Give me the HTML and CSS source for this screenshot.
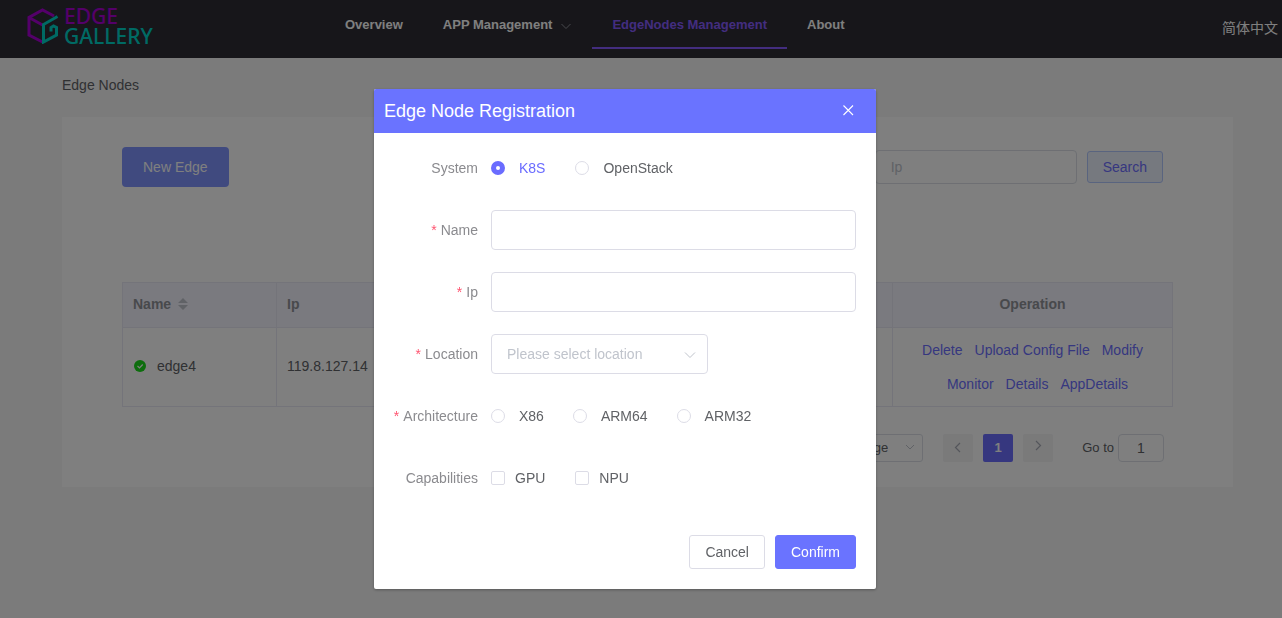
FILE: index.html
```
<!DOCTYPE html>
<html lang="en">
<head>
<meta charset="utf-8">
<title>Edge Nodes</title>
<link rel="stylesheet" href="styles.css">
</head>
<body>
<header class="topbar">
  <a class="logo" href="#">
    <svg class="logo-mark" viewBox="0 0 32 36" fill="none" stroke-width="3" aria-hidden="true">
      <path stroke="#a800d4" d="M27 8 15.500 2 2 9.500v17.500L15.500 34M2 9.500 15.500 17"/>
      <path stroke="#00d4c8" d="M30.500 8.500 16.500 16.500v17.500L29.500 27v-7.500l-3-1.500-2.500 1.500v4"/>
    </svg>
    <span class="logo-text"><span class="logo-edge">EDGE</span><span class="logo-gallery">GALLERY</span></span>
  </a>
  <nav class="nav">
    <a class="nav-item" href="#">Overview</a>
    <a class="nav-item" href="#">APP Management
      <svg class="nav-arrow" viewBox="0 0 12 12" fill="none" stroke="#909399" aria-hidden="true"><path d="M1.500 3 6 7.500 10.500 3"/></svg>
    </a>
    <a class="nav-item active" href="#">EdgeNodes Management</a>
    <a class="nav-item" href="#">About</a>
  </nav>
  <a class="lang" href="#">简体中文</a>
</header>

<main class="page">
  <h1 class="crumb">Edge Nodes</h1>
  <section class="card">
    <div class="toolbar">
      <button class="new-edge" type="button">New Edge</button>
      <form class="search">
        <input class="search-input" type="text" placeholder="Ip" aria-label="Ip">
        <button class="search-button" type="button">Search</button>
      </form>
    </div>
    <table class="nodes">
      <colgroup><col class="col-name"><col class="col-ip"><col class="col-operation"></colgroup>
      <thead>
        <tr>
          <th>Name
            <svg class="sort" viewBox="0 0 10 12" fill="#c0c4cc" aria-hidden="true"><path d="M0 5 5 0l5 5zM0 7h10l-5 5z"/></svg>
          </th>
          <th>Ip</th>
          <th class="center">Operation</th>
        </tr>
      </thead>
      <tbody>
        <tr>
          <td>
            <span class="node">
              <svg class="status" viewBox="0 0 12 12" aria-hidden="true"><circle cx="6" cy="6" r="6" fill="#1adb1a"/><path d="m3.500 6 2 2 3.200-3.500" fill="none" stroke="#fff" stroke-width="1.200"/></svg>
              edge4
            </span>
          </td>
          <td>119.8.127.14</td>
          <td class="operation-cell">
            <div class="operations">
              <button type="button">Delete</button>
              <button type="button">Upload Config File</button>
              <button type="button">Modify</button>
              <button type="button">Monitor</button>
              <button type="button">Details</button>
              <button type="button">AppDetails</button>
            </div>
          </td>
        </tr>
      </tbody>
    </table>
    <div class="pagination">
      <span class="size-wrap">
        <select class="size" aria-label="Page size"><option>10/page</option></select>
        <svg class="size-arrow" viewBox="0 0 12 12" fill="none" stroke="#c0c4cc" aria-hidden="true"><path d="M2 4l4 4 4-4"/></svg>
      </span>
      <div class="pager">
        <button type="button" aria-label="Previous"><svg viewBox="0 0 12 12" fill="none" stroke="#a9adb6" stroke-width="1.200"><path d="M8 1 3.500 5.500 8 10"/></svg></button>
        <button class="current" type="button">1</button>
        <button type="button" aria-label="Next"><svg viewBox="0 0 12 12" fill="none" stroke="#a9adb6" stroke-width="1.200"><path d="M4-1 8.500 3.500 4 8"/></svg></button>
      </div>
      <label class="jump">Go to <input type="text" value="1"></label>
    </div>
  </section>
</main>

<div class="overlay">
  <div class="dialog" role="dialog" aria-modal="true" aria-labelledby="dialog-title">
    <div class="dialog-header">
      <h2 id="dialog-title">Edge Node Registration</h2>
      <button class="close" type="button" aria-label="Close"><svg viewBox="0 0 12 12" fill="none" stroke="#fff" stroke-width="1.100"><path d="m1.500 1.500 9.500 9.500M11 1.500 1.500 11"/></svg></button>
    </div>
    <form class="form">
      <div class="row" role="radiogroup" aria-labelledby="l-system">
        <span class="label" id="l-system">System</span>
        <div class="choices">
          <label class="radio"><input type="radio" name="system" checked><span>K8S</span></label>
          <label class="radio"><input type="radio" name="system"><span>OpenStack</span></label>
        </div>
      </div>
      <div class="row">
        <label class="label required" for="name">Name</label>
        <input class="field" id="name" type="text">
      </div>
      <div class="row">
        <label class="label required" for="ip">Ip</label>
        <input class="field" id="ip" type="text">
      </div>
      <div class="row">
        <label class="label required" for="location">Location</label>
        <div class="select-wrap">
          <select class="field select" id="location"><option>Please select location</option></select>
          <svg class="select-arrow" viewBox="0 0 12 12" fill="none" stroke="#c0c4cc" aria-hidden="true"><path d="M1 3.500l5 5 5-5"/></svg>
        </div>
      </div>
      <div class="row" role="radiogroup" aria-labelledby="l-arch">
        <span class="label required" id="l-arch">Architecture</span>
        <div class="choices tight">
          <label class="radio"><input type="radio" name="arch"><span>X86</span></label>
          <label class="radio"><input type="radio" name="arch"><span>ARM64</span></label>
          <label class="radio"><input type="radio" name="arch"><span>ARM32</span></label>
        </div>
      </div>
      <div class="row" role="group" aria-labelledby="l-cap">
        <span class="label" id="l-cap">Capabilities</span>
        <div class="choices">
          <label class="check"><input type="checkbox"><span>GPU</span></label>
          <label class="check"><input type="checkbox"><span>NPU</span></label>
        </div>
      </div>
    </form>
    <div class="dialog-footer">
      <button class="button" type="button">Cancel</button>
      <button class="button primary" type="button">Confirm</button>
    </div>
  </div>
</div>
</body>
</html>
```
FILE: styles.css
```
* { box-sizing: border-box; }
body {
  margin: 0;
  min-height: 100vh;
  background: #f6f6f6;
  color: #606266;
  font: 14px/20px "Liberation Sans", "Noto Sans CJK SC", sans-serif;
}
button, input, select { font: inherit; color: inherit; margin: 0; }
button { padding: 0; border: 0; background: none; cursor: pointer; }
a { color: inherit; text-decoration: none; }

.topbar {
  display: flex;
  align-items: flex-start;
  height: 58px;
  padding: 0 4px 0 26px;
  background: #2e2c34;
  color: #fff;
}
.logo { display: flex; width: 299px; padding-top: 6px; }
.logo-mark { width: 32px; height: 36px; margin: 2px 5px 0 1px; }
.logo-text { display: grid; font: 500 21px/20px "Noto Sans", sans-serif; }
.logo-edge { color: #a800d4; }
.logo-gallery { color: #00d4c8; }
.nav { display: flex; flex: 1; }
.nav-item {
  display: flex;
  align-items: center;
  gap: 8px;
  height: 49px;
  padding: 2px 20px 0;
  border-bottom: 2px solid transparent;
  font-size: 13px;
  font-weight: bold;
}
.nav-item.active { color: #865bff; border-color: #865bff; }
.nav-arrow { width: 12px; height: 12px; margin-top: 4px; }
.lang { padding-top: 18px; }

.page { padding: 16px 49px 0 62px; }
.crumb { margin: 0 0 21px; padding: 1px 0; font-size: 14px; font-weight: normal; }
.card { padding: 30px 60px 25px; background: #fff; }
.toolbar {
  display: flex;
  justify-content: space-between;
  align-items: center;
  margin-bottom: 95px;
}
.new-edge {
  height: 40px;
  padding: 0 21px;
  border-radius: 4px;
  background: #8095ff;
  color: #fff;
}
.search { display: flex; align-items: center; gap: 10px; padding-right: 10px; }
.search-input {
  width: 202px;
  height: 34px;
  padding: 0 15px;
  border: 1px solid #dcdfe6;
  border-radius: 4px;
  background: #fff;
}
.search-input::placeholder { color: #c0c4cc; }
.search-button {
  height: 32px;
  padding: 0 15px;
  border: 1px solid #b3c8ff;
  border-radius: 3px;
  background: #edf2ff;
  color: #6c6fff;
}

.nodes {
  width: 100%;
  table-layout: fixed;
  border-collapse: collapse;
}
.col-name { width: 154px; }
.col-operation { width: 280px; }
.nodes th, .nodes td { padding: 0 10px 2px; border: 1px solid #e8e8f4; text-align: left; }
.nodes th { height: 45px; background: #f5f4ff; color: #909399; }
.nodes td { height: 79px; }
.nodes td.operation-cell { padding-bottom: 0; }
.nodes th.center { text-align: center; }
.sort { width: 10px; height: 12px; margin-left: 3px; vertical-align: -1px; }
.node { display: flex; align-items: center; gap: 11px; }
.status { width: 12px; height: 12px; margin-left: 1px; }
.operations { display: flex; flex-wrap: wrap; justify-content: center; }
.operations button { height: 34px; padding: 0 1px; color: #6c6fff; }
.operations button + button { margin-left: 10px; }

.pagination {
  display: flex;
  justify-content: flex-end;
  align-items: center;
  padding: 27px 9px 0 0;
  font-size: 13px;
}
.size-wrap, .select-wrap { position: relative; }
.size-wrap { display: flex; margin-right: 20px; }
.size {
  width: 100px;
  height: 28px;
  padding: 0 34px 0 10px;
  appearance: none;
  border: 1px solid #dcdfe6;
  border-radius: 3px;
  background: #fff;
  text-align-last: right;
}
.size-arrow { position: absolute; right: 7px; top: 7px; width: 12px; height: 12px; }
.pager { display: flex; gap: 10px; margin-right: 29px; }
.pager button {
  display: grid;
  place-items: center;
  width: 30px;
  height: 28px;
  border-radius: 2px;
  background: #f4f4f5;
  font-weight: bold;
}
.pager svg { width: 12px; height: 12px; overflow: visible; }
.pager .current { background: #6c6fff; color: #fff; }
.jump { display: flex; align-items: center; gap: 4px; }
.jump input {
  width: 46px;
  height: 28px;
  border: 1px solid #dcdfe6;
  border-radius: 4px;
  background: #fff;
  font-size: 14px;
  text-align: center;
}

.overlay {
  position: fixed;
  inset: 0;
  display: flex;
  justify-content: center;
  align-items: flex-start;
  padding: 89px 32px 0 0;
  overflow: auto;
  background: rgba(0, 0, 0, .5);
}
.dialog {
  width: 100%;
  max-width: 502px;
  border-radius: 2px;
  background: #fff;
  box-shadow: 0 1px 3px rgba(0, 0, 0, .3);
  overflow: hidden;
}
.dialog-header {
  display: flex;
  justify-content: space-between;
  align-items: flex-start;
  height: 44px;
  padding: 10px 22px 0 10px;
  background: #6a73ff;
  color: #fff;
}
.dialog-header h2 { margin: 0; font-size: 18px; font-weight: normal; line-height: 24px; }
.close { display: flex; padding-top: 5px; }
.close svg { width: 12px; height: 12px; }
.form { display: grid; gap: 22px; padding: 15px 20px 0 10px; }
.row { display: flex; align-items: center; height: 40px; }
.label { width: 94px; margin-right: 13px; color: #8b8b8f; text-align: right; }
.required::before { content: "*"; margin-right: 4px; color: #ff5470; }
.field {
  flex: 1;
  width: 100%;
  height: 40px;
  padding: 0 15px;
  border: 1px solid #dcdce6;
  border-radius: 4px;
  background: #fff;
}
.select-wrap { width: 217px; }
.select { appearance: none; color: #c0c4cc; }
.select-arrow { position: absolute; right: 12px; top: 15px; width: 12px; height: 12px; }
.choices { display: flex; gap: 30px; }
.radio, .check { display: flex; align-items: center; }
.radio { gap: 14px; }
.tight { gap: 29px; }
.check { gap: 10px; }
.radio input, .check input {
  appearance: none;
  width: 14px;
  height: 14px;
  border: 1px solid #dcdce6;
  background: #fff;
}
.radio input { border-radius: 50%; }
.check input { border-radius: 2px; }
.radio input:checked { border: 5px solid #6a6cff; }
.radio input:checked + span { color: #6a6cff; }
.dialog-footer {
  display: flex;
  justify-content: flex-end;
  gap: 10px;
  padding: 37px 20px 20px;
}
.button {
  height: 34px;
  padding: 0 15px;
  border: 1px solid #dcdce6;
  border-radius: 3px;
  background: #fff;
}
.primary { border-color: #6a73ff; background: #6a73ff; color: #fff; }
```
